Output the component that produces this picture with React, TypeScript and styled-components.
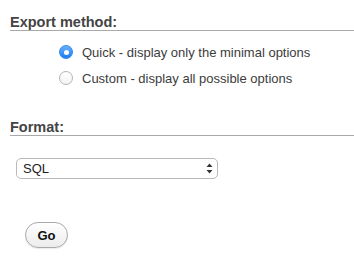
import React, { useState } from "react";
import styled, { createGlobalStyle } from "styled-components";

const GlobalStyle = createGlobalStyle`
  html, body {
    margin: 0;
    padding: 0;
    background: #ffffff;
  }
  body {
    font-family: "Liberation Sans", Arial, Helvetica, sans-serif;
    color: #444;
  }
`;

const Page = styled.div`
  width: 354px;
  height: 268px;
  padding: 14px 0 0 10px;
  box-sizing: border-box;
  overflow: hidden;
`;

const Heading = styled.h3<{ gap?: number }>`
  margin: ${props => props.gap || 0}px 0 0 0;
  font-size: 14.5px;
  line-height: 16px;
  font-weight: bold;
  color: #444;
  border-bottom: 1px solid #a9a9a9;
`;

const RadioList = styled.div`
  margin-top: 8px;
  padding-left: 49px;
  display: flex;
  flex-direction: column;
`;

const RadioRow = styled.label`
  display: flex;
  align-items: center;
  gap: 9px;
  height: 26px;
  font-size: 13px;
  color: #3c3c3c;
  cursor: pointer;
`;

const RadioDot = styled.span<{ checked: boolean }>`
  position: relative;
  width: 14px;
  height: 14px;
  border-radius: 50%;
  box-sizing: border-box;
  flex: none;
  border: 1px solid ${props => (props.checked ? "#2f86f2" : "#b4b4b4")};
  background: ${props =>
    props.checked
      ? "linear-gradient(#69b1fa, #1c7cf4)"
      : "linear-gradient(#ffffff, #f3f3f3)"};

  &::after {
    content: "";
    display: ${props => (props.checked ? "block" : "none")};
    position: absolute;
    left: 50%;
    top: 50%;
    width: 5px;
    height: 5px;
    margin: -2.5px 0 0 -2.5px;
    border-radius: 50%;
    background: #ffffff;
  }
`;

const SelectWrap = styled.div`
  position: relative;
  margin: 22px 0 0 6px;
  width: 202px;
  height: 21px;
`;

const Select = styled.select`
  appearance: none;
  width: 100%;
  height: 100%;
  box-sizing: border-box;
  padding: 0 20px 0 6px;
  border: 1px solid #b9b9b9;
  border-radius: 5px;
  background: #ffffff;
  font-family: "Liberation Sans", Arial, sans-serif;
  font-size: 13px;
  color: #222;
  outline: none;
`;

const Arrows = styled.svg`
  position: absolute;
  right: 5px;
  top: 5px;
  pointer-events: none;
`;

const GoButton = styled.button`
  margin: 43px 0 0 15px;
  width: 43px;
  height: 26px;
  border: 1px solid #a9a9a9;
  border-radius: 13px;
  background: linear-gradient(#ffffff, #ececec);
  font-family: "Liberation Sans", Arial, sans-serif;
  font-size: 13px;
  font-weight: bold;
  color: #111;
  padding: 0;
  box-shadow: 0 1px 1px rgba(0, 0, 0, 0.08);
`;

const methods = [
  { id: "quick", label: "Quick - display only the minimal options" },
  { id: "custom", label: "Custom - display all possible options" },
];

export default function App() {
  const [method, setMethod] = useState("quick");

  return (
    <Page>
      <GlobalStyle />
      <Heading>Export method:</Heading>
      <RadioList>
        {methods.map(m => (
          <RadioRow key={m.id} onClick={() => setMethod(m.id)}>
            <RadioDot checked={method === m.id} />
            {m.label}
          </RadioRow>
        ))}
      </RadioList>
      <Heading gap={28}>Format:</Heading>
      <SelectWrap>
        <Select defaultValue="sql">
          <option value="sql">SQL</option>
          <option value="csv">CSV</option>
        </Select>
        <Arrows width="7" height="11" viewBox="0 0 7 11">
          <path d="M3.5 0.5 L6.5 4 L0.5 4 Z" fill="#333" />
          <path d="M3.5 10.5 L6.5 7 L0.5 7 Z" fill="#333" />
        </Arrows>
      </SelectWrap>
      <div>
        <GoButton>Go</GoButton>
      </div>
    </Page>
  );
}
